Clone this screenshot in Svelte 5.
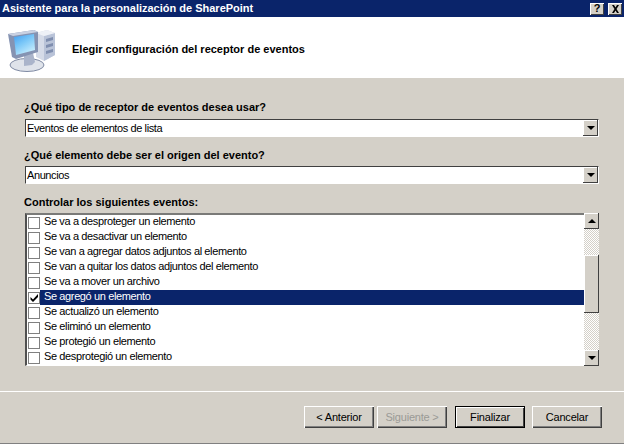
<script>
  const events = [
    "Se va a desproteger un elemento",
    "Se va a desactivar un elemento",
    "Se van a agregar datos adjuntos al elemento",
    "Se van a quitar los datos adjuntos del elemento",
    "Se va a mover un archivo",
    "Se agregó un elemento",
    "Se actualizó un elemento",
    "Se eliminó un elemento",
    "Se protegió un elemento",
    "Se desprotegió un elemento"
  ];
  let selected = 5;
</script>

<div class="dialog">
  <div class="titlebar">
    <span class="title">Asistente para la personalización de SharePoint</span>
    <div class="caption-btns">
      <span class="cap-btn">?</span>
      <span class="cap-btn">
        <svg width="9" height="8" viewBox="0 0 9 8"><path d="M1 0h2l1.500 2.500L6 0h2L5.500 4 8 8H6L4.500 5.500 3 8H1l2.500-4z" fill="#000"/></svg>
      </span>
    </div>
  </div>

  <header class="head">
    <svg class="pc" width="52" height="50" viewBox="7 26 52 50">
      <defs>
        <linearGradient id="scr" x1="0" y1="0" x2="0.6" y2="1">
          <stop offset="0" stop-color="#3f9df0"/>
          <stop offset="0.5" stop-color="#7cc8f8"/>
          <stop offset="1" stop-color="#c4ecfd"/>
        </linearGradient>
      </defs>
      <ellipse cx="27" cy="65" rx="17" ry="6.500" fill="#dfe3ea" stroke="#7f8aa3"/>
      <path d="M36 33l11-3 8 3v22l-11 6-8-4z" fill="#d5dbe8"/>
      <path d="M44 36l11-3v22l-11 6z" fill="#b9c3d8"/>
      <path d="M36 33l11-3 8 3-11 3z" fill="#eef1f7"/>
      <path d="M46 39l7-2v3l-7 2zM46 45l7-2v3l-7 2zM46 51l7-2v3l-7 2z" fill="#7f8eaf"/>
      <path d="M24 55l9-2 2 9-3 3-8 1z" fill="#aab4ca"/>
      <path d="M8 34l26-4 4 2v20l-22 7-4-2z" fill="#8593b2"/>
      <path d="M8 34l26-4 4 2-25 4z" fill="#c9d1e2"/>
      <path d="M14 37l20-3 1 16-19 5z" fill="url(#scr)"/>
    </svg>
    <h1>Elegir configuración del receptor de eventos</h1>
  </header>

  <main class="body">
    <label class="lbl first">¿Qué tipo de receptor de eventos desea usar?</label>
    <div class="combo">
      <span class="val">Eventos de elementos de lista</span>
      <span class="sbtn"><i class="down"></i></span>
    </div>

    <label class="lbl">¿Qué elemento debe ser el origen del evento?</label>
    <div class="combo">
      <span class="val">Anuncios</span>
      <span class="sbtn"><i class="down"></i></span>
    </div>

    <label class="lbl">Controlar los siguientes eventos:</label>
    <div class="list">
      <div class="rows">
        {#each events as ev, i}
          <div class="row">
            <span class="check">
              {#if i === selected}
                <svg width="9" height="9" viewBox="0 0 9 9"><path d="M0.500 4l2.500 2.500L8 1v3L3 9 0.500 6.500z" fill="#000"/></svg>
              {/if}
            </span>
            <span class="text" class:sel={i === selected}>{ev}</span>
          </div>
        {/each}
      </div>
      <div class="scroll">
        <span class="sbtn"><i class="up"></i></span>
        <div class="track t1"></div>
        <span class="thumb"></span>
        <div class="track t2"></div>
        <span class="sbtn"><i class="down"></i></span>
      </div>
    </div>
  </main>

  <footer class="foot">
    <button>&lt; Anterior</button>
    <button class="dis" disabled>Siguiente &gt;</button>
    <button class="def">Finalizar</button>
    <button>Cancelar</button>
  </footer>
</div>

<style>
  :global(body) {
    margin: 0;
    background: #d4d0c8;
  }
  .dialog {
    width: 624px;
    height: 444px;
    display: flex;
    flex-direction: column;
    background: #d4d0c8;
    font-family: "Liberation Sans", Arial, sans-serif;
    font-size: 11px;
    color: #000;
    overflow: hidden;
  }
  .titlebar {
    height: 17px;
    background: #0a246a;
    display: flex;
    align-items: center;
    justify-content: space-between;
    padding: 0 2px 0 3px;
    flex: none;
  }
  .title {
    color: #fff;
    font-weight: bold;
    font-size: 11px;
    margin: -2px 0 0 -1px;
  }
  .caption-btns {
    display: flex;
    gap: 4px;
  }
  .cap-btn {
    width: 14px;
    height: 12px;
    background: #d4d0c8;
    box-shadow: inset 1px 1px 0 #fff, inset -1px -1px 0 #404040;
    display: flex;
    align-items: center;
    justify-content: center;
    font-weight: bold;
    font-size: 11px;
    line-height: 1;
  }
  .head {
    height: 61px;
    background: #fff;
    display: flex;
    align-items: center;
    flex: none;
  }
  .pc {
    margin: 7px 0 0 7px;
    flex: none;
  }
  h1 {
    margin: 3px 0 0 13px;
    font-size: 11px;
    font-weight: bold;
  }
  .body {
    padding: 0 25px;
    flex: none;
    display: flex;
    flex-direction: column;
  }
  .lbl {
    font-weight: bold;
    height: 14px;
    line-height: 14px;
    margin: 11px 0 4px -1px;
  }
  .lbl.first {
    margin-top: 22px;
    margin-bottom: 5px;
  }
  .combo {
    width: 574px;
    height: 18px;
    box-sizing: border-box;
    background: #fff;
    border-top: 1px solid #404040;
    border-left: 1px solid #404040;
    border-right: 1px solid #fff;
    border-bottom: 1px solid #fff;
    display: flex;
    align-items: center;
    justify-content: space-between;
  }
  .val {
    padding-left: 1px;
    letter-spacing: -0.4px;
  }
  .sbtn {
    width: 15px;
    height: 16px;
    box-sizing: border-box;
    flex: none;
    background: #d4d0c8;
    box-shadow: inset -1px -1px 0 #404040, inset 1px 1px 0 #fff;
    display: flex;
    align-items: center;
    justify-content: center;
  }
  .down {
    border-left: 4px solid transparent;
    border-right: 4px solid transparent;
    border-top: 4px solid #000;
  }
  .up {
    border-left: 4px solid transparent;
    border-right: 4px solid transparent;
    border-bottom: 4px solid #000;
  }
  .list {
    width: 574px;
    height: 153px;
    box-sizing: border-box;
    background: #fff;
    border-top: 2px solid #7a7a78;
    border-left: 2px solid #505050;
    border-bottom: 1px solid #fff;
    display: flex;
    justify-content: space-between;
  }
  .rows {
    width: 557px;
    display: flex;
    flex-direction: column;
  }
  .row {
    height: 15px;
    display: flex;
    align-items: center;
    padding-left: 1px;
  }
  .check {
    width: 10px;
    height: 10px;
    border: 1px solid #808080;
    box-sizing: content-box;
    display: flex;
    align-items: center;
    justify-content: center;
    flex: none;
  }
  .text {
    flex: 1;
    height: 15px;
    line-height: 13px;
    padding-left: 4px;
    letter-spacing: -0.38px;
  }
  .text.sel {
    background: #0a246a;
    color: #fff;
  }
  .scroll {
    width: 15px;
    margin-top: -2px;
    margin-bottom: -1px;
    display: flex;
    flex-direction: column;
    background: #d4d0c8;
  }
  .track {
    background-color: #fff;
    background-image: conic-gradient(#d4d0c8 25%, #fff 0 50%, #d4d0c8 0 75%, #fff 0);
    background-size: 2px 2px;
  }
  .t1 {
    height: 26px;
  }
  .t2 {
    height: 37px;
  }
  .thumb {
    display: block;
    height: 58px;
    flex: none;
    background: #d4d0c8;
    box-shadow: inset -1px -1px 0 #404040, inset 1px 1px 0 #fff;
  }
  .foot {
    margin-top: 25px;
    height: 53px;
    box-sizing: border-box;
    border-top: 1px solid #fff;
    border-bottom: 1px solid #808080;
    display: flex;
    align-items: flex-start;
    padding: 14px 0 0 304px;
    flex: none;
  }
  button {
    width: 70px;
    height: 22px;
    margin: 0 3px 0 0;
    padding: 0;
    border: none;
    background: #d4d0c8;
    box-shadow: inset 1px 1px 0 #fff, inset -1px -1px 0 #404040, inset -2px -2px 0 #808080;
    font: inherit;
    color: #000;
    letter-spacing: -0.2px;
  }
  button.dis {
    color: #9a9a96;
    margin-right: 8px;
  }
  button.def {
    margin-right: 7px;
    outline: 1px solid #000;
    outline-offset: -1px;
    box-shadow: inset 2px 2px 0 #fff, inset -2px -2px 0 #404040;
  }
</style>
